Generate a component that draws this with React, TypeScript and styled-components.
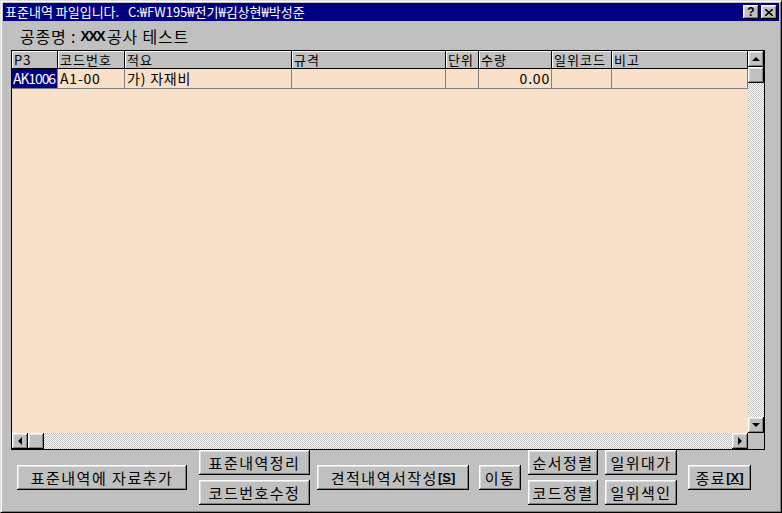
import React from "react";
import styled, { createGlobalStyle, css } from "styled-components";

const FACE = "#c0c0c0";
const PEACH = "#f9e0c8";
const KFONT = `"Noto Sans CJK KR", "Noto Sans", sans-serif`;

const Global = createGlobalStyle`
  html, body { margin: 0; padding: 0; background: ${FACE}; }
  body { font-family: ${KFONT}; }
  * { box-sizing: border-box; }
`;

const raised = css`
  background: ${FACE};
  box-shadow: inset -1px -1px #000, inset 1px 1px #fff, inset -2px -2px #808080, inset 2px 2px #dfdfdf;
`;

const Window = styled.div`
  width: 782px;
  height: 513px;
  background: ${FACE};
  border: 1px solid;
  border-color: #dfdfdf #000 #000 #dfdfdf;
  box-shadow: inset 1px 1px #fff, inset -1px -1px #808080;
  padding: 2px;
  display: flex;
  flex-direction: column;
`;

const TitleBar = styled.div`
  height: 18px;
  background: #000080;
  color: #fff;
  display: flex;
  align-items: center;
  justify-content: space-between;
  padding: 0 2px 0 2px;
  font-family: ${KFONT};
  font-size: 13px;
  line-height: 18px;
  white-space: pre;
`;

const TitleText = styled.span`
  letter-spacing: 0;
`;

const TitleButtons = styled.div`
  display: flex;
  gap: 2px;
`;

const TitleBtn = styled.div`
  ${raised};
  width: 16px;
  height: 14px;
  display: flex;
  align-items: center;
  justify-content: center;
  color: #000;
  font-family: "Liberation Sans", sans-serif;
  font-weight: bold;
  font-size: 12px;
  line-height: 14px;
`;

const Content = styled.div`
  flex: 1;
  display: flex;
  flex-direction: column;
  padding: 0 14px 0 8px;
`;

const Label = styled.div`
  height: 29px;
  padding-left: 9px;
  display: flex;
  align-items: center;
  font-size: 16px;
  color: #000;
  letter-spacing: 0.8px;
  white-space: pre;
`;

const BoldX = styled.span`
  font-family: "Liberation Sans", sans-serif;
  font-weight: bold;
  font-size: 14px;
  letter-spacing: -1.5px;
  margin-right: 3px;
`;

const GridFrame = styled.div`
  height: 400px;
  border: 1px solid #000;
  display: grid;
  grid-template-columns: 736px 16px;
  grid-template-rows: 1fr 16px;
  background: ${PEACH};
`;

const Body = styled.div`
  display: flex;
  flex-direction: column;
  overflow: hidden;
`;

const COLS = "46px 67px 167px 154px 33px 73px 60px 136px";

const Row = styled.div`
  display: grid;
  grid-template-columns: ${COLS};
`;

const HeadCell = styled.div`
  height: 18px;
  background: ${FACE};
  border-right: 1px solid #000;
  border-bottom: 1px solid #000;
  box-shadow: inset 1px 1px #fff;
  font-size: 13px;
  line-height: 17px;
  padding-left: 2px;
  color: #000;
  white-space: nowrap;
  letter-spacing: 1px;
`;

const Cell = styled.div<{ $align?: "left" | "right"; $selected?: boolean }>`
  height: 20px;
  border-right: 1px solid #808080;
  border-bottom: 1px solid #808080;
  font-size: 14px;
  line-height: 19px;
  padding: 0 1px 0 ${(p) => (p.$selected ? 1 : 2)}px;
  text-align: ${(p) => p.$align ?? "left"};
  white-space: pre;
  color: ${(p) => (p.$selected ? "#fff" : "#000")};
  background: ${(p) => (p.$selected ? "#000080" : "transparent")};
  letter-spacing: ${(p) => (p.$selected ? "-1.1px" : "0.8px")};
`;

const checker = css`
  background-color: #fff;
  background-image: repeating-conic-gradient(${FACE} 0 25%, #fff 0 50%);
  background-size: 2px 2px;
`;

const VScroll = styled.div`
  display: flex;
  flex-direction: column;
  ${checker};
`;

const HScroll = styled.div`
  display: flex;
  ${checker};
`;

const Spacer = styled.div`
  flex: 1;
`;

const SBtn = styled.div`
  ${raised};
  width: 16px;
  height: 16px;
  flex: none;
  display: flex;
  align-items: center;
  justify-content: center;
`;

const Corner = styled.div`
  background: ${FACE};
`;

type Dir = "up" | "down" | "left" | "right";

const Arrow = styled.div<{ $dir: Dir }>`
  width: 0;
  height: 0;
  ${(p) =>
    p.$dir === "up"
      ? css`border-left: 4px solid transparent; border-right: 4px solid transparent; border-bottom: 4px solid #000;`
      : p.$dir === "down"
      ? css`border-left: 4px solid transparent; border-right: 4px solid transparent; border-top: 4px solid #000;`
      : p.$dir === "left"
      ? css`border-top: 4px solid transparent; border-bottom: 4px solid transparent; border-right: 4px solid #000;`
      : css`border-top: 4px solid transparent; border-bottom: 4px solid transparent; border-left: 4px solid #000;`}
`;

const ButtonBar = styled.div`
  flex: 1;
  display: flex;
  align-items: center;
  padding: 0 0 5px 6px;
`;

const Stack = styled.div<{ $ml: number }>`
  display: flex;
  flex-direction: column;
  gap: 5px;
  margin-left: ${(p) => p.$ml}px;
`;

const Btn = styled.div<{ $w: number; $ml?: number }>`
  ${raised};
  width: ${(p) => p.$w}px;
  height: 25px;
  margin-left: ${(p) => p.$ml ?? 0}px;
  display: flex;
  align-items: center;
  justify-content: center;
  font-size: 15px;
  line-height: 25px;
  color: #000;
  white-space: pre;
  letter-spacing: 1.5px;
`;

const Acc = styled.span`
  font-family: "Liberation Sans", sans-serif;
  font-weight: bold;
  font-size: 13px;
  letter-spacing: 0;
  margin-left: 0px;
`;

const headers = ["P3", "코드번호", "적요", "규격", "단위", "수량", "일위코드", "비고"];

export default function App() {
  return (
    <>
      <Global />
      <Window>
        <TitleBar>
          <TitleText>{"표준내역 파일입니다.   C:₩FW195₩전기₩김상현₩박성준"}</TitleText>
          <TitleButtons>
            <TitleBtn>?</TitleBtn>
            <TitleBtn>
              <svg width="8" height="7" viewBox="0 0 8 7">
                <path d="M0 0 L8 7 M8 0 L0 7" stroke="#000" strokeWidth="1.6" />
              </svg>
            </TitleBtn>
          </TitleButtons>
        </TitleBar>
        <Content>
          <Label>
            {"공종명 : "}
            <BoldX>XXX</BoldX>
            {"공사 테스트"}
          </Label>
          <GridFrame>
            <Body>
              <Row>
                {headers.map((h) => (
                  <HeadCell key={h}>{h}</HeadCell>
                ))}
              </Row>
              <Row>
                <Cell $selected>AK1006</Cell>
                <Cell>A1-00</Cell>
                <Cell>{"가) 자재비"}</Cell>
                <Cell />
                <Cell />
                <Cell $align="right">0.00</Cell>
                <Cell />
                <Cell />
              </Row>
            </Body>
            <VScroll>
              <SBtn>
                <Arrow $dir="up" />
              </SBtn>
              <SBtn />
              <Spacer />
              <SBtn>
                <Arrow $dir="down" />
              </SBtn>
            </VScroll>
            <HScroll>
              <SBtn>
                <Arrow $dir="left" />
              </SBtn>
              <SBtn />
              <Spacer />
              <SBtn>
                <Arrow $dir="right" />
              </SBtn>
            </HScroll>
            <Corner />
          </GridFrame>
          <ButtonBar>
            <Btn $w={170}>표준내역에 자료추가</Btn>
            <Stack $ml={12}>
              <Btn $w={111}>표준내역정리</Btn>
              <Btn $w={111}>코드번호수정</Btn>
            </Stack>
            <Btn $w={152} $ml={7}>
              견적내역서작성
              <Acc>
                [<u>S</u>]
              </Acc>
            </Btn>
            <Btn $w={42} $ml={10}>이동</Btn>
            <Stack $ml={7}>
              <Btn $w={70}>순서정렬</Btn>
              <Btn $w={70}>코드정렬</Btn>
            </Stack>
            <Stack $ml={7}>
              <Btn $w={72}>일위대가</Btn>
              <Btn $w={72}>일위색인</Btn>
            </Stack>
            <Btn $w={63} $ml={11}>
              종료
              <Acc>
                [<u>X</u>]
              </Acc>
            </Btn>
          </ButtonBar>
        </Content>
      </Window>
    </>
  );
}
